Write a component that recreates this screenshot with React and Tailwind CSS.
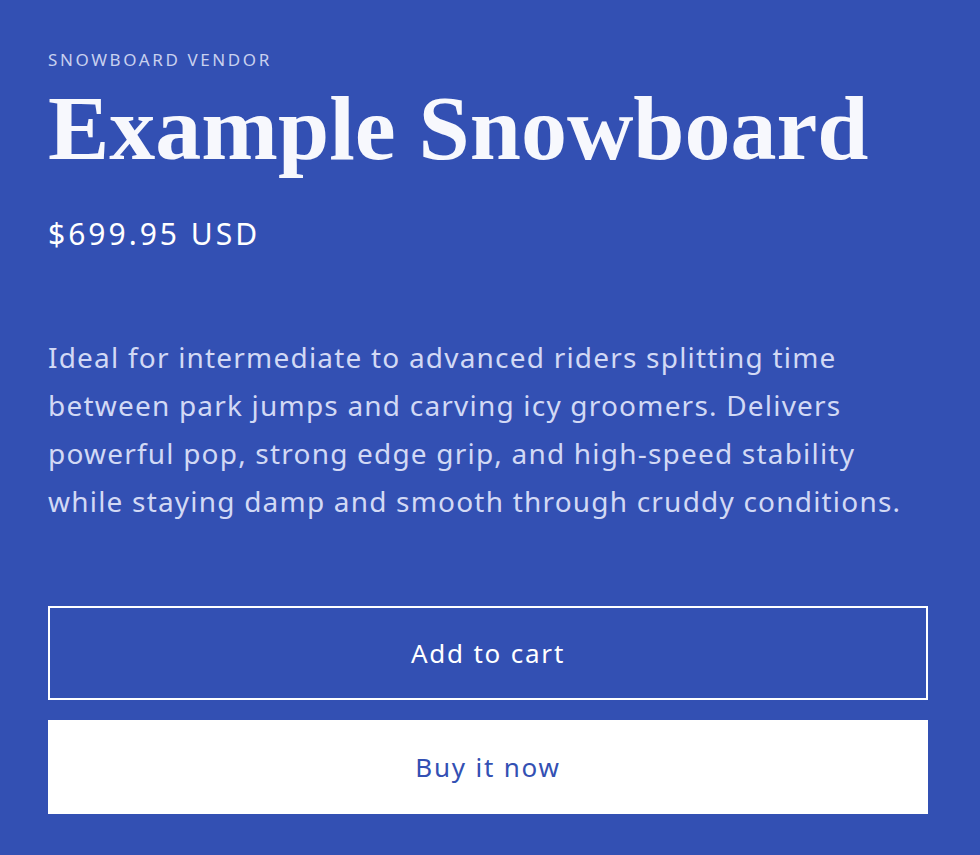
export default function App() {
  return (
    <div className="w-[980px] h-[855px] bg-[#3350b3] text-white" style={{ fontFamily: '"Noto Sans", sans-serif' }}>
      <div className="pl-[48px] pt-[50px] w-[928px]">
        <p className="text-[17px] leading-[20px] tracking-[2.6px] text-[#c9d1ef] uppercase">Snowboard Vendor</p>
        <h1 className="mt-[10px] text-[92px] leading-[96px] font-bold text-[#f7f8fd]" style={{ fontFamily: '"Liberation Serif", serif' }}>Example Snowboard</h1>
        <p className="mt-[40px] text-[30px] leading-[36px] tracking-[3px]">$699.95 USD</p>
        <p className="mt-[81px] text-[28px] leading-[48px] tracking-[1.2px] text-[#d2d9f5] w-[880px]">
          Ideal for intermediate to advanced riders splitting time between park jumps and carving icy groomers. Delivers powerful pop, strong edge grip, and high-speed stability while staying damp and smooth through cruddy conditions.
        </p>
        <div className="mt-[81px] flex flex-col gap-[20px] w-[880px]">
          <button className="h-[94px] w-full border-2 border-white text-[26px] tracking-[1.8px] text-white">Add to cart</button>
          <button className="h-[94px] w-full bg-white text-[26px] tracking-[1.8px] text-[#3350b3]">Buy it now</button>
        </div>
      </div>
    </div>
  );
}
